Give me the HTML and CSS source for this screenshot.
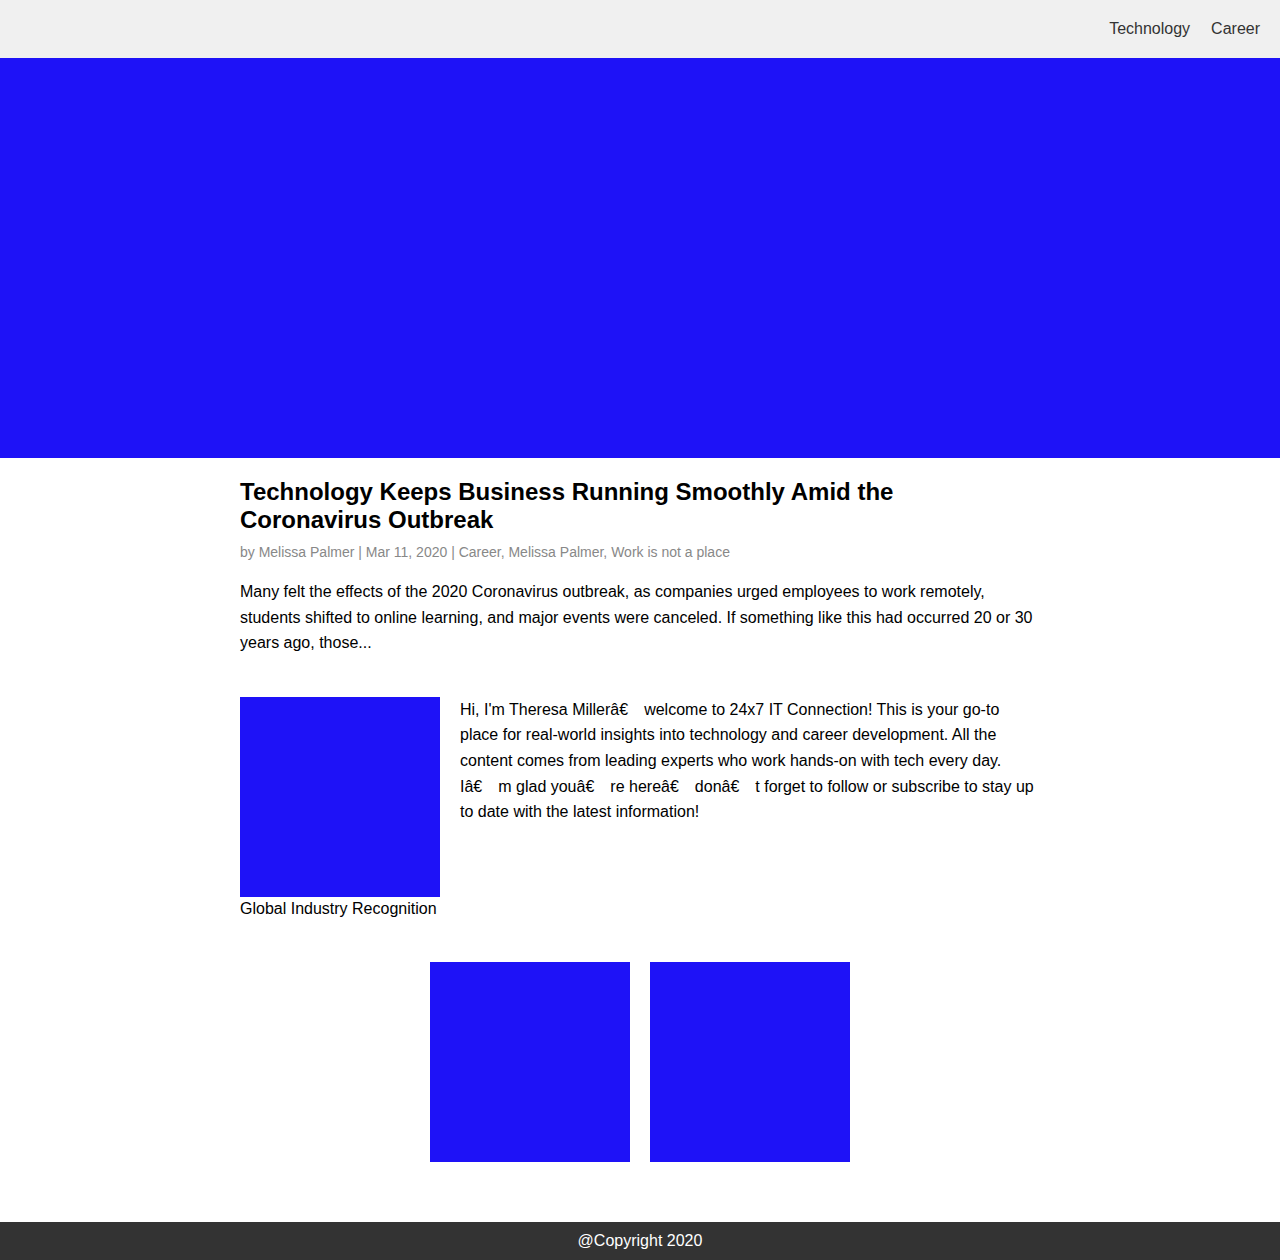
FILE: index.html
```html
<!DOCTYPE html>
<html>
<head>
<meta charset="utf-8">
<link rel="stylesheet" href="styles.css">
</head>
<body>
<header class="topbar">
  <nav class="nav">
    <a href="#">Technology</a>
    <a href="#">Career</a>
  </nav>
</header>
<div class="hero"></div>
<main class="content">
  <article class="post">
    <h1 class="post-title">Technology Keeps Business Running Smoothly Amid the Coronavirus Outbreak</h1>
    <p class="post-meta">by Melissa Palmer | Mar 11, 2020 | Career, Melissa Palmer, Work is not a place</p>
    <p class="post-excerpt">Many felt the effects of the 2020 Coronavirus outbreak, as companies urged employees to work remotely, students shifted to online learning, and major events were canceled. If something like this had occurred 20 or 30 years ago, those...</p>
  </article>
  <section class="author">
    <figure class="author-fig">
      <div class="box"></div>
      <figcaption>Global Industry Recognition</figcaption>
    </figure>
    <p class="author-text">Hi, I'm Theresa <span class="nw">Millerâ€<span class="gap"></span>welcome</span> to 24x7 IT Connection! This is your go-to place for real-world insights into technology and career development. All the content comes from leading experts who work hands-on with tech every day. <span class="nw">Iâ€<span class="gap"></span>m</span> glad <span class="nw">youâ€<span class="gap"></span>re</span> <span class="nw">hereâ€<span class="gap"></span>donâ€<span class="gap"></span>t</span> forget to follow or subscribe to stay up to date with the latest information!</p>
  </section>
  <section class="gallery">
    <div class="box"></div>
    <div class="box"></div>
  </section>
</main>
<footer class="footer">@Copyright 2020</footer>
</body>
</html>
```
FILE: styles.css
```css
* { box-sizing: border-box; }
html, body { margin: 0; padding: 0; }
body {
  font-family: "Liberation Sans", Arial, sans-serif;
  color: #000;
  background: #fff;
}
.topbar {
  height: 58px;
  background: #f0f0f0;
  display: flex;
  justify-content: flex-end;
  align-items: center;
  padding: 0 20px 0 0;
}
.nav { display: flex; gap: 21px; }
.nav a {
  color: #333;
  text-decoration: none;
  font-size: 16px;
}
.hero {
  height: 400px;
  background: #1e12f7;
}
.content {
  width: 800px;
  margin: 0 auto;
  padding-top: 20px;
}
.post-title {
  margin: 0;
  font-size: 24px;
  line-height: 28px;
  font-weight: bold;
}
.post-meta {
  margin: 10px 0 0;
  font-size: 14px;
  line-height: 16px;
  color: #888;
}
.post-excerpt {
  margin: 19px 0 0;
  font-size: 16px;
  line-height: 25.6px;
}
.author {
  display: flex;
  gap: 20px;
  margin-top: 41px;
  align-items: flex-start;
}
.author-fig { margin: 0; flex: 0 0 200px; }
.author-fig figcaption {
  font-size: 16px;
  line-height: 24px;
  white-space: nowrap;
}
.box {
  width: 200px;
  height: 200px;
  background: #1e12f7;
}
.author-text {
  margin: 0;
  font-size: 16px;
  line-height: 25.6px;
  flex: 1;
}
.nw { white-space: nowrap; }
.gap { display: inline-block; width: 16px; }
.gallery {
  display: flex;
  justify-content: center;
  gap: 20px;
  margin-top: 41px;
  padding-bottom: 60px;
}
.footer {
  height: 38px;
  background: #333;
  color: #fff;
  font-size: 16px;
  text-align: center;
  line-height: 38px;
}
```
